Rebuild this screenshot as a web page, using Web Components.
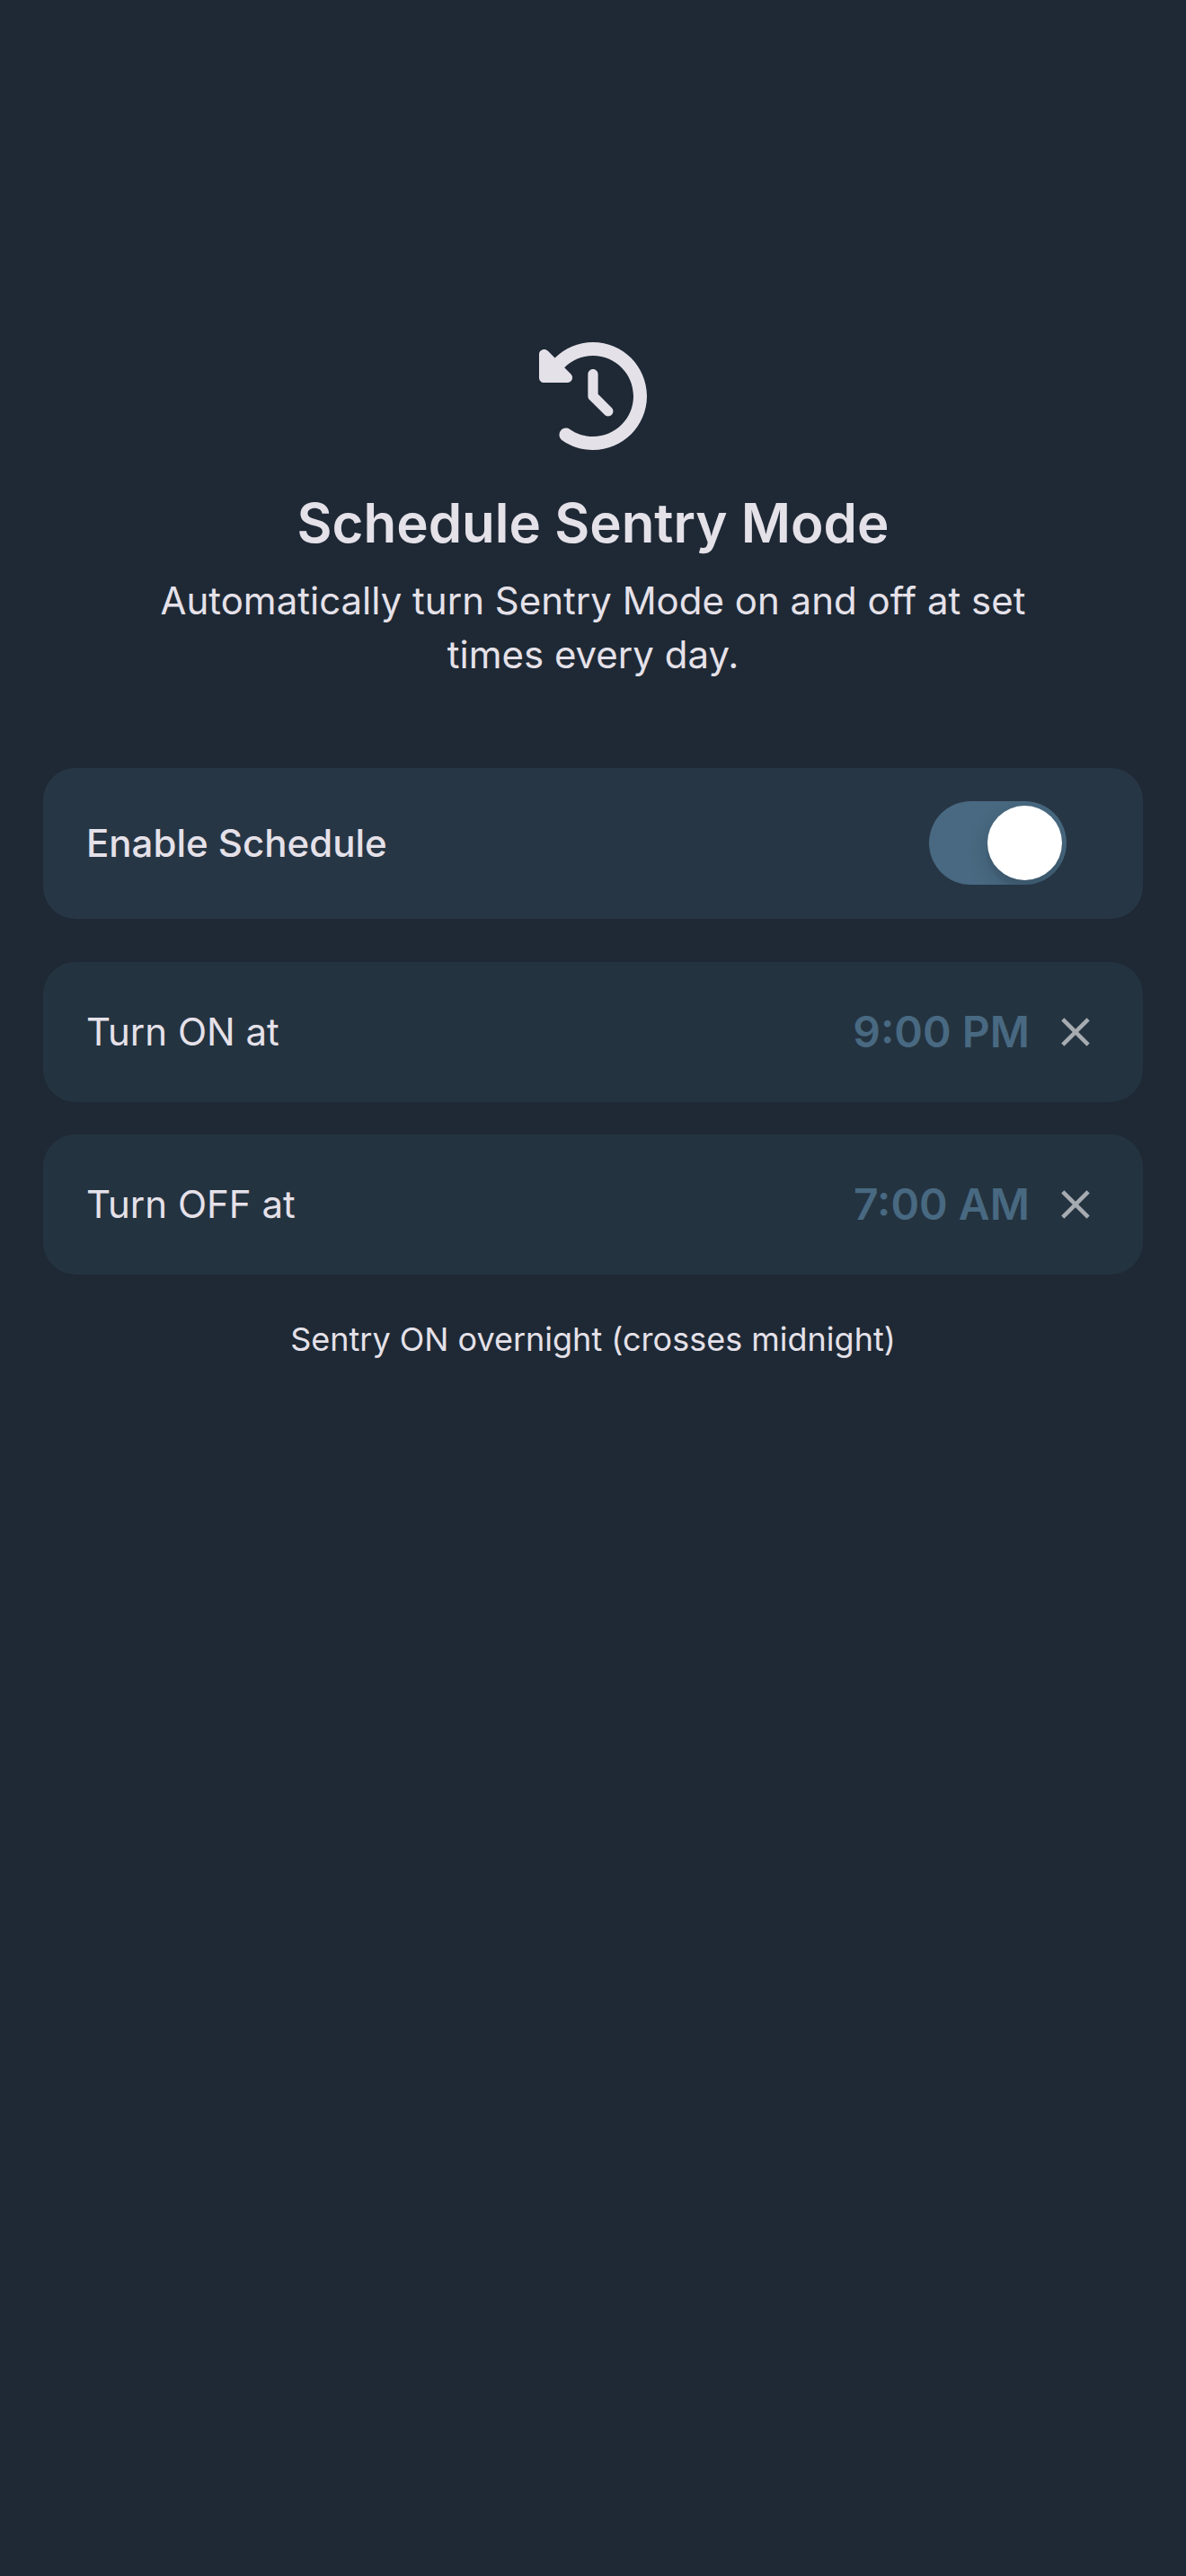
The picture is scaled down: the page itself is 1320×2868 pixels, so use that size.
<!DOCTYPE html>
<html lang="en">
<head>
<meta charset="utf-8">
<meta name="viewport" content="width=device-width, initial-scale=1">
<title>Schedule Sentry Mode</title>
<style>
  :root {
    --bg: #1e2935;
    --card: #243340;
    --card-raised: #273645;
    --accent: #486981;
    --text: #e5e1e9;
    --muted: #a7acb1;
  }

  body {
    margin: 0;
    min-height: 100vh;
    background: var(--bg);
    color: var(--text);
    font: 400 42px/60px Inter, Roboto, "Liberation Sans", sans-serif;
  }
</style>
</head>
<body>
<sentry-schedule>
  <schedule-header slot="header" heading="Schedule Sentry Mode">Automatically turn Sentry Mode on and off at set times every day.</schedule-header>
  <switch-card checked>Enable Schedule</switch-card>
  <div slot="times">
    <time-card time="9:00 PM">Turn ON at</time-card>
    <time-card time="7:00 AM">Turn OFF at</time-card>
  </div>
  <span slot="note">Sentry ON overnight (crosses midnight)</span>
</sentry-schedule>

<script>
class SentrySchedule extends HTMLElement {
  constructor() {
    super()
    this.attachShadow({ mode: 'open' })
    this.shadowRoot.innerHTML = `
      <style>
        :host {
          display: block;
          padding: 381px 48px 96px;
        }

        main {
          display: flex;
          flex-direction: column;
          gap: 48px;
        }

        header {
          margin-bottom: 48px;
        }

        ::slotted([slot="times"]) {
          display: flex;
          flex-direction: column;
          gap: 36px;
        }

        p {
          margin: 0;
          font-size: 36px;
          line-height: 48px;
          text-align: center;
        }
      </style>
      <main>
        <header><slot name="header"></slot></header>
        <slot></slot>
        <slot name="times"></slot>
        <p><slot name="note"></slot></p>
      </main>
    `
  }
}

class ScheduleHeader extends HTMLElement {
  connectedCallback() {
    if (!this.shadowRoot) this.attachShadow({ mode: 'open' })
    this.render()
  }

  render() {
    this.shadowRoot.innerHTML = `
      <style>
        :host {
          display: flex;
          flex-direction: column;
          align-items: center;
          text-align: center;
        }

        svg {
          width: 120px;
          height: 120px;
          fill: currentColor;
        }

        h1 {
          margin: 36px 0 12px;
          font-size: 60px;
          font-weight: 600;
          line-height: 90px;
        }

        p {
          margin: 0;
          padding: 0 96px;
        }
      </style>
      <svg viewBox="0 0 512 512" aria-hidden="true">
        <path d="M75 75L41 41C25.9 25.9 0 36.6 0 57.9V168c0 13.3 10.7 24 24 24H134.1c21.4 0 32.1-25.9 17-41l-30.8-30.8C155 85.5 203 64 256 64c106 0 192 86 192 192s-86 192-192 192c-40.8 0-78.6-12.7-109.7-34.4c-14.5-10.1-34.4-6.6-44.6 7.9s-6.6 34.4 7.9 44.6C151.2 495 201.7 512 256 512c141.4 0 256-114.6 256-256S397.4 0 256 0C185.3 0 121.3 28.7 75 75zm181 53c-13.3 0-24 10.7-24 24V256c0 6.4 2.5 12.5 7 17l72 72c9.4 9.4 24.6 9.4 33.9 0s9.4-24.6 0-33.9l-65-65V152c0-13.3-10.7-24-24-24z"/>
      </svg>
      <h1>${this.getAttribute('heading') || ''}</h1>
      <p><slot></slot></p>
    `
  }
}

class SwitchCard extends HTMLElement {
  connectedCallback() {
    if (!this.shadowRoot) this.attachShadow({ mode: 'open' })
    this.render()
  }

  render() {
    this.shadowRoot.innerHTML = `
      <style>
        :host {
          display: flex;
          align-items: center;
          gap: 24px;
          padding: 37px 85px 38px 48px;
          border-radius: 36px;
          background: var(--card-raised);
        }

        label {
          flex: 1;
          font-weight: 500;
        }

        input {
          appearance: none;
          display: flex;
          box-sizing: border-box;
          width: 153px;
          height: 93px;
          margin: 0;
          padding: 5px;
          border-radius: 47px;
          background: #3a4652;
          overflow: hidden;
          cursor: pointer;
        }

        input::before {
          content: "";
          width: 83px;
          height: 83px;
          border-radius: 50%;
          background: #fff;
          box-shadow: 0 9px 24px rgba(0, 0, 0, 0.15), 0 9px 3px rgba(0, 0, 0, 0.06);
        }

        input:checked {
          justify-content: flex-end;
          background: var(--accent);
        }

        input:focus-visible {
          outline: 3px solid var(--text);
          outline-offset: 3px;
        }
      </style>
      <label for="toggle"><slot></slot></label>
      <input id="toggle" type="checkbox" role="switch" ${this.hasAttribute('checked') ? 'checked' : ''}>
    `
  }
}

class TimeCard extends HTMLElement {
  static observedAttributes = ['time']

  constructor() {
    super()
    this.attachShadow({ mode: 'open' })
  }

  connectedCallback() {
    this.render()
  }

  attributeChangedCallback() {
    this.render()
  }

  render() {
    const time = this.getAttribute('time') || 'Not set'
    this.shadowRoot.innerHTML = `
      <style>
        :host {
          display: flex;
          align-items: center;
          gap: 24px;
          padding: 48px;
          border-radius: 36px;
          background: var(--card);
        }

        label {
          flex: 1;
        }

        button {
          display: flex;
          margin: 0;
          border: 0;
          padding: 0;
          background: none;
          color: var(--accent);
          font: inherit;
          cursor: pointer;
        }

        button:focus-visible {
          outline: 3px solid var(--text);
          outline-offset: 3px;
        }

        .time {
          font-size: 48px;
          font-weight: 600;
        }

        .clear {
          color: var(--muted);
        }

        svg {
          width: 54px;
          height: 54px;
          fill: currentColor;
        }
      </style>
      <label for="time"><slot></slot></label>
      <button id="time" class="time" type="button">${time}</button>
      <button class="clear" type="button" aria-label="Clear time">
        <svg viewBox="0 0 24 24" aria-hidden="true">
          <path d="M19 6.41L17.59 5 12 10.59 6.41 5 5 6.41 10.59 12 5 17.59 6.41 19 12 13.41 17.59 19 19 17.59 13.41 12z"/>
        </svg>
      </button>
    `
    this.shadowRoot.querySelector('.clear')?.addEventListener('click', () => this.removeAttribute('time'))
  }
}

customElements.define('sentry-schedule', SentrySchedule)
customElements.define('schedule-header', ScheduleHeader)
customElements.define('switch-card', SwitchCard)
customElements.define('time-card', TimeCard)
</script>
</body>
</html>
